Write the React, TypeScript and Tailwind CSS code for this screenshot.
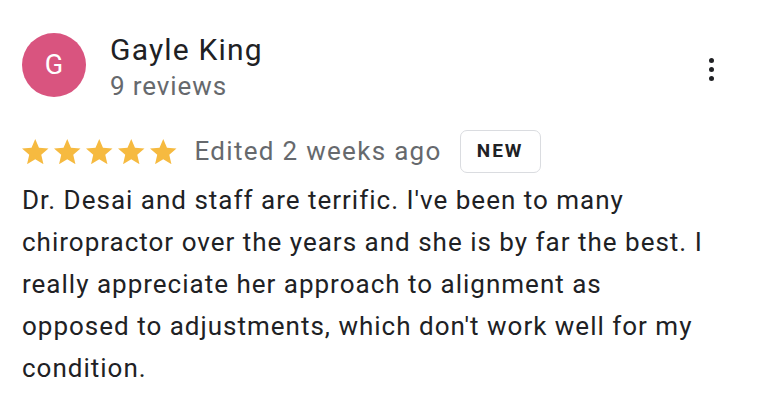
const StarIcon = () => (
  <svg viewBox="2 2 20 19" className="w-[26.5px] h-[25.2px]" fill="#f6ba40">
    <path d="M12 17.27L18.18 21l-1.64-7.03L22 9.24l-7.19-.61L12 2 9.19 8.63 2 9.24l5.46 4.73L5.82 21z" />
  </svg>
);

export default function App() {
  return (
    <div className="w-[758px] h-[404px] bg-white overflow-hidden pl-[22px] pr-[24px] pt-[33px] font-['Roboto',sans-serif] text-[#202124]">
      {/* header */}
      <div className="flex items-start">
        <div className="w-16 h-16 rounded-full bg-[#d9547f] flex items-center justify-center text-white text-[27px]">
          G
        </div>
        <div className="ml-6 flex-1">
          <div className="text-[30px] leading-[34px] tracking-[1.2px]">Gayle King</div>
          <div className="mt-[2px] text-[26px] leading-[34px] tracking-[0.9px] text-[#66696d]">9 reviews</div>
        </div>
        <div className="mt-[25px] mr-[20px] flex flex-col items-center gap-[4px]">
          <span className="w-[5px] h-[5px] rounded-full bg-[#202124]" />
          <span className="w-[5px] h-[5px] rounded-full bg-[#202124]" />
          <span className="w-[5px] h-[5px] rounded-full bg-[#202124]" />
        </div>
      </div>

      {/* rating */}
      <div className="flex items-center mt-[27px] h-[43px]">
        <div className="flex gap-[5.5px]">
          {[0, 1, 2, 3, 4].map((i) => (
            <StarIcon key={i} />
          ))}
        </div>
        <span className="ml-[18px] text-[26px] tracking-[1.3px] text-[#66696d]">Edited 2 weeks ago</span>
        <span className="ml-[18px] h-[43px] w-[81px] flex items-center justify-center border border-[#dadce0] rounded-[7px] text-[19px] font-bold tracking-[2px]">
          NEW
        </span>
      </div>

      {/* body */}
      <p className="mt-[6px] text-[26px] leading-[42px] tracking-[1px] whitespace-nowrap">
        Dr. Desai and staff are terrific. I've been to many
        <br />
        chiropractor over the years and she is by far the best. I
        <br />
        really appreciate her approach to alignment as
        <br />
        opposed to adjustments, which don't work well for my
        <br />
        condition.
      </p>
    </div>
  );
}
